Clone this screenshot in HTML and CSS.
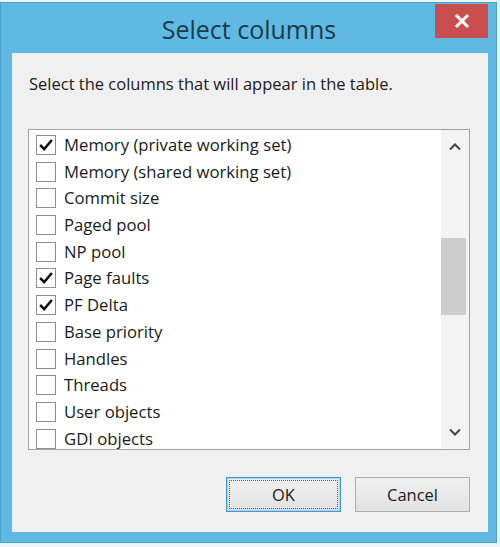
FILE: index.html
```html
<!DOCTYPE html>
<html>
<head>
<meta charset="utf-8">
<link rel="stylesheet" href="styles.css">
</head>
<body>
<div class="window">
  <div class="titlebar">
    <div class="spacer"></div>
    <div class="title">Select columns</div>
    <div class="close">
      <svg width="16" height="16" viewBox="0 0 16 16"><path d="M3 3 L13 13 M13 3 L3 13" stroke="#fff" stroke-width="3" stroke-linecap="square"/></svg>
    </div>
  </div>
  <div class="client">
    <p class="intro">Select the columns that will appear in the table.</p>
    <div class="listbox">
      <div class="items">
        <div class="row"><span class="cb checked"><svg viewBox="0 0 20 20"><path d="M3.5 10 L8 14.5 L16.5 4.5" fill="none" stroke="#111" stroke-width="2.8"/></svg></span><span class="label">Memory (private working set)</span></div>
        <div class="row"><span class="cb"></span><span class="label">Memory (shared working set)</span></div>
        <div class="row"><span class="cb"></span><span class="label">Commit size</span></div>
        <div class="row"><span class="cb"></span><span class="label">Paged pool</span></div>
        <div class="row"><span class="cb"></span><span class="label">NP pool</span></div>
        <div class="row"><span class="cb checked"><svg viewBox="0 0 20 20"><path d="M3.5 10 L8 14.5 L16.5 4.5" fill="none" stroke="#111" stroke-width="2.8"/></svg></span><span class="label">Page faults</span></div>
        <div class="row"><span class="cb checked"><svg viewBox="0 0 20 20"><path d="M3.5 10 L8 14.5 L16.5 4.5" fill="none" stroke="#111" stroke-width="2.8"/></svg></span><span class="label">PF Delta</span></div>
        <div class="row"><span class="cb"></span><span class="label">Base priority</span></div>
        <div class="row"><span class="cb"></span><span class="label">Handles</span></div>
        <div class="row"><span class="cb"></span><span class="label">Threads</span></div>
        <div class="row"><span class="cb"></span><span class="label">User objects</span></div>
        <div class="row"><span class="cb"></span><span class="label">GDI objects</span></div>
      </div>
      <div class="scrollbar">
        <div class="arrow up"><svg width="14" height="10" viewBox="0 0 14 10"><path d="M2 7.5 L7 2.5 L12 7.5" fill="none" stroke="#444" stroke-width="2"/></svg></div>
        <div class="track"><div class="thumb"></div></div>
        <div class="arrow down"><svg width="14" height="10" viewBox="0 0 14 10"><path d="M2 2.5 L7 7.5 L12 2.5" fill="none" stroke="#444" stroke-width="2"/></svg></div>
      </div>
    </div>
    <div class="buttons">
      <button class="btn default"><span class="focus">OK</span></button>
      <button class="btn">Cancel</button>
    </div>
  </div>
</div>
</body>
</html>
```

FILE: styles.css
```css
html, body {
  margin: 0;
  padding: 0;
  background: #eef5f9;
}
body {
  width: 500px;
  height: 547px;
  overflow: hidden;
  font-family: "Open Sans", "Noto Sans", sans-serif;
}
.window {
  margin-top: 2px;
  width: 497px;
  height: 541px;
  box-sizing: border-box;
  background: #5fb9e2;
  border: 1px solid #4aa0cc;
  padding: 0 8px 10px 11px;
  display: flex;
  flex-direction: column;
}
.titlebar {
  height: 50px;
  display: grid;
  grid-template-columns: 1fr auto 1fr;
  align-items: start;
}
.title {
  font-size: 25px;
  line-height: 32px;
  margin-top: 10px;
  color: #1d3a48;
  margin-left: -2px;
}
.close {
  justify-self: end;
  margin-top: 1px;
  width: 53px;
  height: 34px;
  background: #c94f4f;
  display: flex;
  align-items: center;
  justify-content: center;
}
.close svg { display: block; }
.client {
  flex: 1;
  background: #f0f0f0;
  padding: 21px 18px 0 16px;
  box-sizing: border-box;
}
.intro {
  margin: 0 0 0 1px;
  font-size: 16.5px;
  line-height: 20px;
  color: #1a1a1a;
}
.listbox {
  margin-top: 35px;
  height: 321px;
  box-sizing: border-box;
  border: 1px solid #a3a3a3;
  background: #ffffff;
  display: flex;
  overflow: hidden;
}
.items {
  flex: 1;
  padding: 5px 0 0 7px;
}
.row {
  height: 26.7px;
  display: flex;
  align-items: flex-start;
  gap: 8px;
}
.cb {
  width: 20px;
  height: 20px;
  box-sizing: border-box;
  border: 1px solid #8e8e8e;
  background: #fff;
  flex: none;
}
.cb svg { display: block; width: 18px; height: 18px; }
.label {
  font-size: 16.7px;
  line-height: 20px;
  color: #1a1a1a;
}
.scrollbar {
  width: 28px;
  background: #f3f3f3;
  display: flex;
  flex-direction: column;
}
.arrow {
  height: 34px;
  display: flex;
  align-items: center;
  justify-content: center;
}
.track {
  flex: 1;
  padding-top: 74px;
}
.thumb {
  height: 77px;
  width: 25px;
  background: #cdcdcd;
}
.buttons {
  margin-top: 27px;
  display: flex;
  justify-content: flex-end;
  gap: 14px;
}
.btn {
  width: 115px;
  height: 35px;
  box-sizing: border-box;
  border: 1px solid #adadad;
  background: linear-gradient(#f0f0f0, #e2e2e2);
  font-family: "Open Sans", "Noto Sans", sans-serif;
  font-size: 16.5px;
  color: #1a1a1a;
  padding: 0;
  display: flex;
  align-items: center;
  justify-content: center;
}
.btn.default {
  border: 1px solid #3d95dd;
  box-shadow: inset 0 0 0 1px #a9d3f5;
  padding: 2px;
}
.btn.default .focus {
  width: 100%;
  height: 100%;
  box-sizing: border-box;
  border: 1px dotted #555;
  display: flex;
  align-items: center;
  justify-content: center;
}
```
